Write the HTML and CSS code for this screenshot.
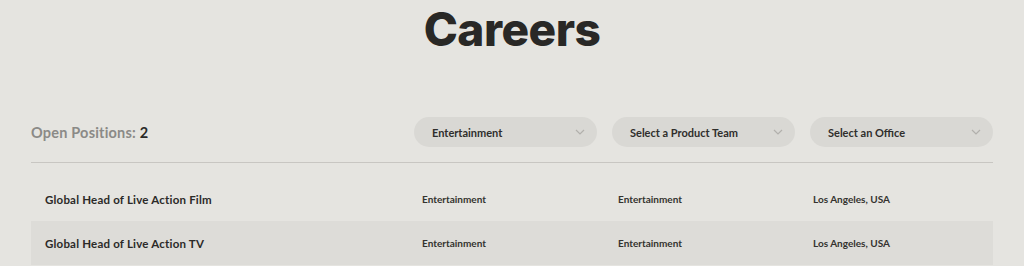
FILE: index.html
```html
<!DOCTYPE html>
<html lang="en">
<head>
    <meta charset="UTF-8">
    <meta name="viewport" content="width=device-width, initial-scale=1.0">
    <title>Careers</title>
    <link rel="stylesheet" href="styles.css">
</head>
<body>

    <h1 class="page-title">Careers</h1>

    <section class="jobs">
        <div class="toolbar">
            <p class="count">Open Positions: <span>2</span></p>
            <div class="filters">
                <div class="select">
                    <span>Entertainment</span>
                    <svg width="10" height="6" viewBox="0 0 10 6"><path d="M1 1l4 4 4-4" fill="none" stroke="#b2b0ac" stroke-width="1.2"/></svg>
                </div>
                <div class="select">
                    <span>Select a Product Team</span>
                    <svg width="10" height="6" viewBox="0 0 10 6"><path d="M1 1l4 4 4-4" fill="none" stroke="#b2b0ac" stroke-width="1.2"/></svg>
                </div>
                <div class="select">
                    <span>Select an Office</span>
                    <svg width="10" height="6" viewBox="0 0 10 6"><path d="M1 1l4 4 4-4" fill="none" stroke="#b2b0ac" stroke-width="1.2"/></svg>
                </div>
            </div>
        </div>

        <div class="job-list">
            <div class="job">
                <span class="job-title">Global Head of Live Action Film</span>
                <span>Entertainment</span>
                <span>Entertainment</span>
                <span>Los Angeles, USA</span>
            </div>
            <div class="job alt">
                <span class="job-title">Global Head of Live Action TV</span>
                <span>Entertainment</span>
                <span>Entertainment</span>
                <span>Los Angeles, USA</span>
            </div>
        </div>
    </section>

</body>
</html>
```

FILE: styles.css
```css
body {
    margin: 0;
    background: #e5e4e0;
    font-family: Lato, Arial, sans-serif;
    color: #2b2a28;
}
.page-title {
    margin: 0;
    padding-top: 1px;
    text-align: center;
    font-family: Inter, Arial, sans-serif;
    font-size: 46px;
    font-weight: 800;
    letter-spacing: -0.5px;
    line-height: 56px;
    color: #292826;
}
.jobs {
    width: 962px;
    margin: 60px auto 0;
}
.toolbar {
    display: flex;
    align-items: center;
    justify-content: space-between;
    padding-bottom: 15px;
    border-bottom: 1px solid #c8c6c2;
}
.count {
    margin: 0;
    font-size: 14.5px;
    font-weight: 700;
    letter-spacing: 0.2px;
    color: #8b8a87;
}
.count span {
    color: #2b2a28;
}
.filters {
    display: flex;
    gap: 15px;
}
.select {
    width: 183px;
    height: 30px;
    box-sizing: border-box;
    padding: 0 12px 0 18px;
    display: flex;
    align-items: center;
    justify-content: space-between;
    background: #d9d8d4;
    border-radius: 15px;
    font-size: 11px;
    font-weight: 700;
    color: #2f2e2c;
}
.job-list {
    margin-top: 14px;
}
.job {
    display: grid;
    grid-template-columns: 377px 196px 195px 1fr;
    align-items: center;
    height: 44px;
    padding-left: 14px;
    font-size: 10px;
    font-weight: 700;
    color: #34332f;
}
.job.alt {
    background: #dddcd8;
}
.job-title {
    font-size: 11.5px;
    letter-spacing: 0.2px;
    color: #2b2a28;
}
```
